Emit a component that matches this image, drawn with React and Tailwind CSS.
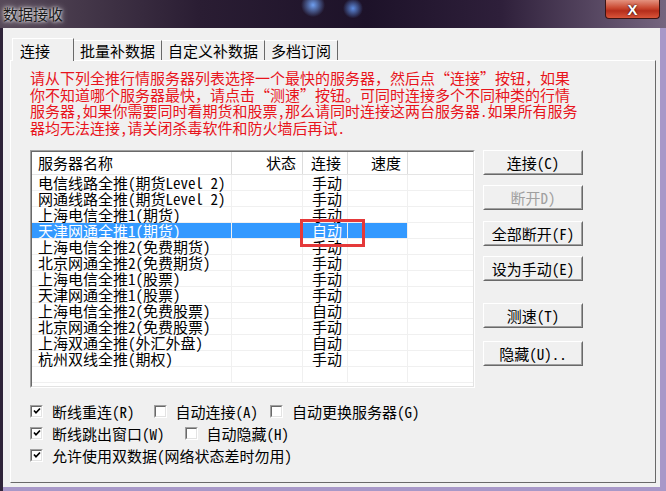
import React from "react";

const rows = [
  ["电信线路全推(期货Level 2)", "手动"],
  ["网通线路全推(期货Level 2)", "手动"],
  ["上海电信全推1(期货)", "手动"],
  ["天津网通全推1(期货)", "自动", true],
  ["上海电信全推2(免费期货)", "手动"],
  ["北京网通全推2(免费期货)", "手动"],
  ["上海电信全推1(股票)", "手动"],
  ["天津网通全推1(股票)", "手动"],
  ["上海电信全推2(免费股票)", "自动"],
  ["北京网通全推2(免费股票)", "手动"],
  ["上海双通全推(外汇外盘)", "自动"],
  ["杭州双线全推(期权)", "手动"],
  ["", ""],
];

function Btn({ children, disabled, className = "" }) {
  return (
    <div
      className={`h-[25px] w-[100px] border border-t-white border-l-white border-r-[#696969] border-b-[#696969] ${className}`}
    >
      <div
        className={`flex h-full w-full items-center justify-center border border-t-[#f0f0f0] border-l-[#f0f0f0] border-r-[#a0a0a0] border-b-[#a0a0a0] text-[15px] leading-none ${
          disabled ? "text-[#a0a0a0]" : "text-black"
        }`}
      >
        {children}
      </div>
    </div>
  );
}

function Check({ checked, label, className = "" }) {
  return (
    <div className={`flex items-center ${className}`}>
      <div className="h-[13px] w-[13px] border border-t-[#a0a0a0] border-l-[#a0a0a0] border-r-white border-b-white">
        <div className="flex h-full w-full items-center justify-center border border-t-[#696969] border-l-[#696969] border-r-[#e3e3e3] border-b-[#e3e3e3] bg-white">
          {checked && (
            <svg width="8" height="8" viewBox="0 0 8 8">
              <polyline points="1,3.5 3,5.8 7,1.5" fill="none" stroke="#000" strokeWidth="1.7" />
            </svg>
          )}
        </div>
      </div>
      <span className="ml-[9px] text-[15px] leading-none">{label}</span>
    </div>
  );
}

export default function App() {
  return (
    <div className="relative flex h-[491px] w-[666px] flex-col overflow-hidden bg-[linear-gradient(to_right,#2f2439_0,#2f2439_3px,#a898c8_3px)] font-['Noto_Sans_Mono_CJK_SC','Noto_Sans_CJK_SC',sans-serif] text-black">
      {/* TITLE BAR */}
      <div className="relative flex h-[28px] items-center bg-[radial-gradient(circle_at_47%_18%,#6f9ff0_0,transparent_12px),radial-gradient(circle_at_53%_30%,#5d8be0_0,transparent_10px),linear-gradient(to_right,#574a59,#2a1d33_30%,#1d1229_55%,#2e1f3a_75%,#75657f)] pl-[3px]">
        <span className="text-[15px] text-[#1a1a1a] [text-shadow:0_0_6px_#fff,0_0_3px_#fff]">数据接收</span>
        <div className="absolute right-[6px] top-0 flex h-[19px] w-[55px] items-center justify-center rounded-b-[4px] border border-t-0 border-[#3b1414] bg-[linear-gradient(to_bottom,#e4927f,#c9472f_45%,#b52d1b_60%,#d9553a)]">
          <span className="font-['Liberation_Sans',sans-serif] text-[15px] font-bold leading-none text-white [text-shadow:0_0_2px_#000]">X</span>
        </div>
      </div>

      {/* CLIENT AREA */}
      <div className="ml-[3px] mr-[6px] mb-[4px] flex flex-1 flex-col bg-[#f0f0f0] pl-[7px] pr-[4px] pt-[10px] pb-[4px]">
        {/* TABS */}
        <div className="relative z-10 -mb-px flex items-end pl-[2px] text-[15px] leading-none">
          <div className="flex h-[23px] w-[62px] items-center border border-b-0 border-t-white border-l-white border-r-[#696969] bg-[#f0f0f0] pl-[7px]">
            连接
          </div>
          <div className="mb-px flex h-[20px] items-center border-t border-r border-t-white border-r-[#696969] px-[6px]">
            批量补数据
          </div>
          <div className="mb-px flex h-[20px] items-center border-t border-r border-t-white border-r-[#696969] px-[6px]">
            自定义补数据
          </div>
          <div className="mb-px flex h-[20px] items-center border-t border-r border-t-white border-r-[#696969] px-[6px]">
            多档订阅
          </div>
        </div>

        {/* TAB PANE */}
        <div className="flex flex-1 flex-col border border-t-white border-l-white border-r-[#696969] border-b-[#696969] pl-[19px] pt-[9px]">
          <p className="text-[15px] leading-[16.5px] text-[#e8141c]">
            请从下列全推行情服务器列表选择一个最快的服务器，然后点“连接”按钮，如果
            <br />
            你不知道哪个服务器最快，请点击“测速”按钮。可同时连接多个不同种类的行情
            <br />
            服务器,如果你需要同时看期货和股票,那么请同时连接这两台服务器.如果所有服务
            <br />
            器均无法连接,请关闭杀毒软件和防火墙后再试.
          </p>

          <div className="mt-[14px] flex">
            {/* LIST */}
            <div className="relative h-[238px] w-[445px] border border-t-[#a0a0a0] border-l-[#a0a0a0] border-r-white border-b-white">
              <div className="h-full w-full overflow-hidden border border-t-[#696969] border-l-[#696969] border-r-[#e3e3e3] border-b-[#e3e3e3] bg-white text-[15px] leading-[16px]">
                <div className="flex h-[23px] border-b border-[#e5e5e5]">
                  <div className="flex w-[200px] items-center border-r border-[#dcdcdc] pl-[6px]">服务器名称</div>
                  <div className="flex w-[71px] items-center justify-end border-r border-[#dcdcdc] pr-[6px]">状态</div>
                  <div className="flex w-[45px] items-center justify-end border-r border-[#dcdcdc] pr-[6px]">连接</div>
                  <div className="flex w-[60px] items-center justify-end border-r border-[#dcdcdc] pr-[6px]">速度</div>
                  <div className="flex-1" />
                </div>
                {rows.map(([name, mode, sel], i) => (
                  <div key={i} className="flex h-[16px] border-b border-[#f0f0f0]">
                    <div className={`w-[200px] whitespace-nowrap border-r border-[#f0f0f0] pl-[6px] ${sel ? "bg-[#3399ff] text-white" : ""}`}>
                      {name}
                    </div>
                    <div className={`w-[71px] border-r border-[#f0f0f0] ${sel ? "bg-[#3399ff]" : ""}`} />
                    <div className={`w-[45px] border-r border-[#f0f0f0] pl-[9px] ${sel ? "bg-[#3399ff] text-white" : ""}`}>
                      {mode}
                    </div>
                    <div className={`w-[60px] border-r border-[#f0f0f0] ${sel ? "bg-[#3399ff]" : ""}`} />
                    <div className="flex-1" />
                  </div>
                ))}
              </div>
              <div className="absolute left-[269px] top-[68px] z-10 h-[28px] w-[65px] border-[3px] border-[#e5393a]" />
            </div>

            {/* BUTTONS */}
            <div className="ml-[8px] flex flex-col">
              <Btn>连接(C)</Btn>
              <Btn disabled className="mt-[10px]">断开D)</Btn>
              <Btn className="mt-[11px]">全部断开(F)</Btn>
              <Btn className="mt-[10px]">设为手动(E)</Btn>
              <Btn className="mt-[22px]">测速(T)</Btn>
              <Btn className="mt-[13px]">隐藏(U)..</Btn>
            </div>
          </div>

          {/* OPTIONS */}
          <div className="mt-[12px] flex flex-col">
            <div className="flex h-[22px] items-center">
              <Check checked label="断线重连(R)" />
              <Check label="自动连接(A)" className="ml-[19px]" />
              <Check label="自动更换服务器(G)" className="ml-[12px]" />
            </div>
            <div className="flex h-[22px] items-center">
              <Check checked label="断线跳出窗口(W)" />
              <Check label="自动隐藏(H)" className="ml-[20px]" />
            </div>
            <div className="flex h-[22px] items-center">
              <Check checked label="允许使用双数据(网络状态差时勿用)" />
            </div>
          </div>
        </div>
      </div>
    </div>
  );
}
